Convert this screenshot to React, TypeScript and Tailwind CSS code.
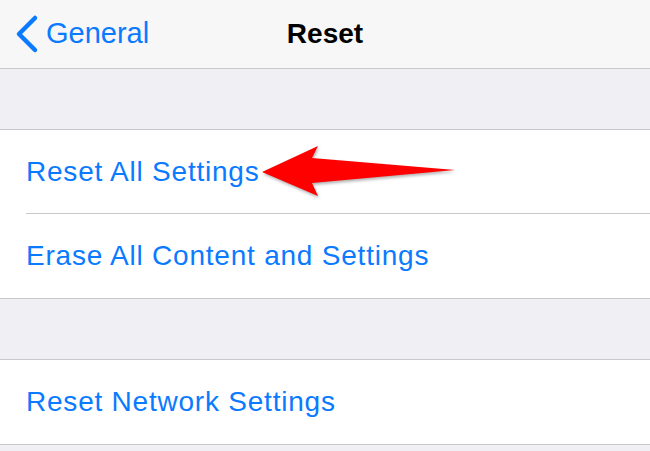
function Row({ label, last }: { label: string; last?: boolean }) {
  return (
    <div className="bg-white pl-[26px]">
      <div
        className={
          'flex h-[84px] items-center text-[28px] tracking-[0.78px] text-[#0a7aff] ' +
          (last ? '' : 'border-b border-[#c8c7cc]')
        }
      >
        {label}
      </div>
    </div>
  );
}

function RedArrow() {
  return (
    <svg
      className="absolute left-[255px] top-[140px]"
      width="210"
      height="66"
      viewBox="255 140 210 66"
      style={{ filter: 'drop-shadow(1px 2px 1.5px rgba(0,0,0,0.3))' }}
    >
      <polygon points="262,172 318,146 312,158 455,170 312,183 318,196" fill="#ff0000" />
    </svg>
  );
}

export default function App() {
  return (
    <div className="relative h-[451px] w-[650px] overflow-hidden bg-[#efeff4] font-['Liberation_Sans',Arial,sans-serif]">
      <header className="relative flex h-[69px] items-center border-b border-[#c8c7cc] bg-[#f7f7f7]">
        <div className="flex items-center pl-[14px] text-[29px] text-[#0a7aff]">
          <svg width="26" height="40" viewBox="0 0 26 40" className="mr-[6px]">
            <path d="M21 4 L5 20 L21 36" fill="none" stroke="#0a7aff" strokeWidth="4.5" strokeLinecap="round" strokeLinejoin="round" />
          </svg>
          <span>General</span>
        </div>
        <div className="absolute left-0 right-0 text-center text-[28px] font-semibold text-black">
          Reset
        </div>
      </header>
      <div className="h-[60px]" />
      <div className="border-y border-[#c8c7cc]">
        <Row label="Reset All Settings" />
        <Row label="Erase All Content and Settings" last />
      </div>
      <div className="h-[60px]" />
      <div className="border-y border-[#c8c7cc]">
        <Row label="Reset Network Settings" last />
      </div>
      <RedArrow />
    </div>
  );
}
